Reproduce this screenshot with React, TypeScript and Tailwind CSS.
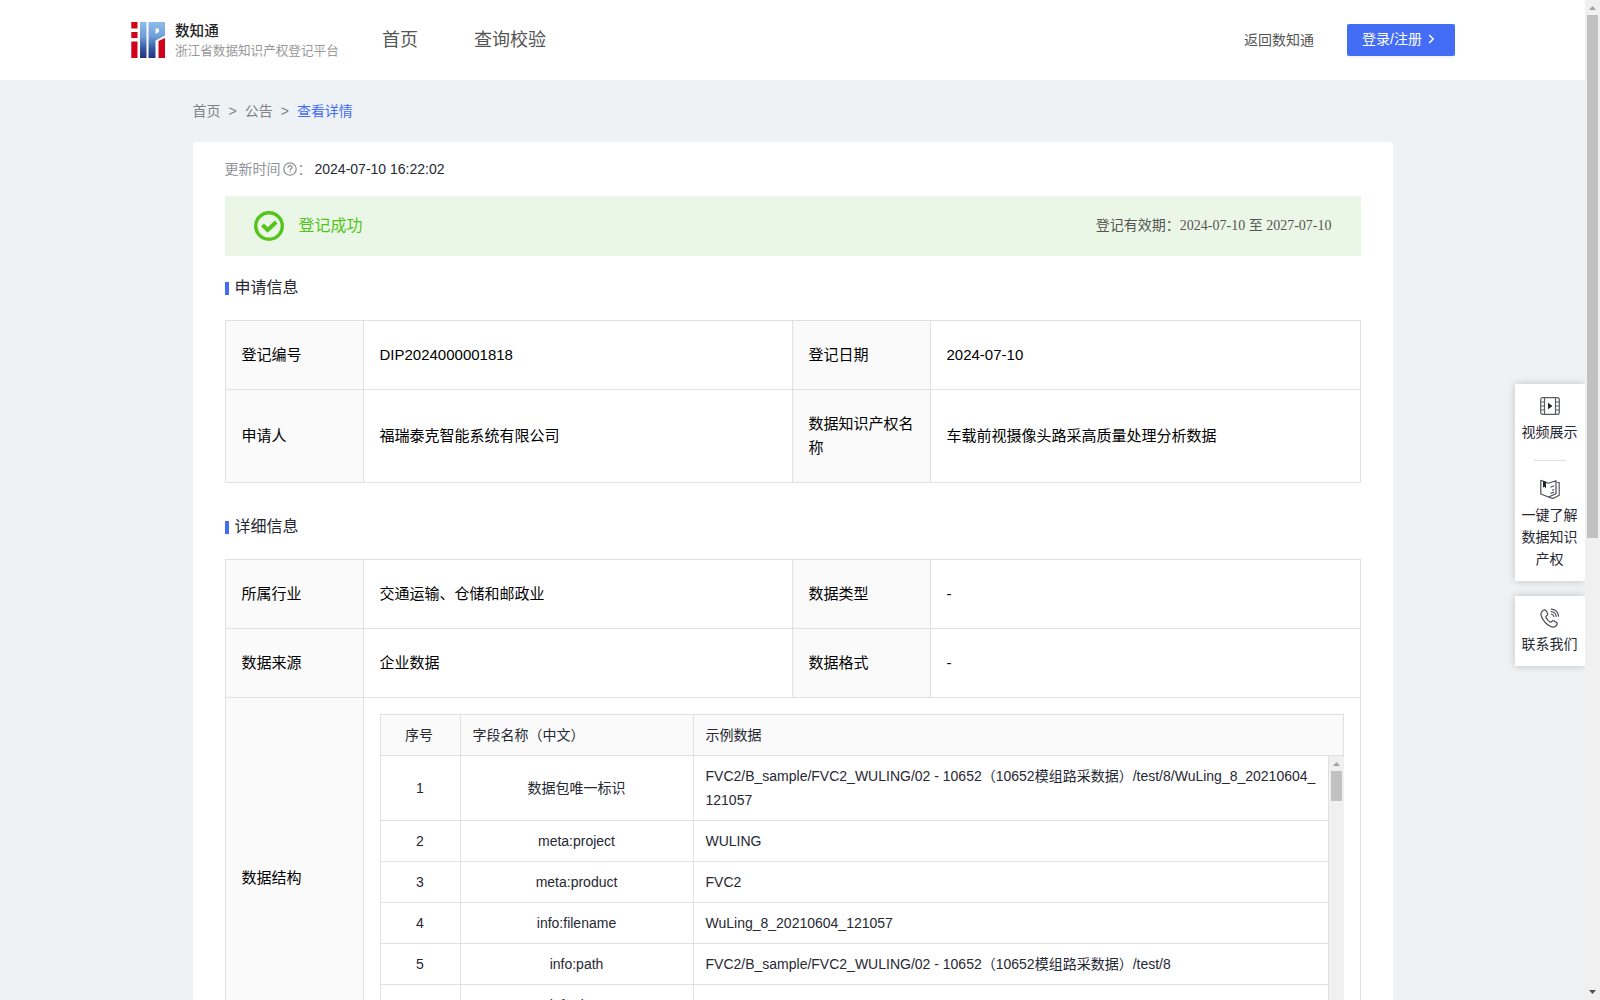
import React from "react";

const SANS = "font-['Liberation_Sans','Noto_Sans_CJK_SC',sans-serif]";
const SERIF = "font-['Liberation_Serif','Noto_Sans_CJK_SC',serif]";

function Logo() {
  return (
    <svg className="h-9 w-[35px] shrink-0" viewBox="0 0 35 36">
      <defs>
        <linearGradient id="logoBlue" x1="0" y1="0" x2="0" y2="36" gradientUnits="userSpaceOnUse">
          <stop offset="0" stopColor="#8fbcea" />
          <stop offset="0.4" stopColor="#6f9fd8" />
          <stop offset="0.75" stopColor="#34559f" />
          <stop offset="1" stopColor="#22337f" />
        </linearGradient>
      </defs>
      <path fill="#d0021b" d="M0.300 0h6.200v6.500h-6.200zM0.300 10h6.200v6h-6.200zM0.300 19.500h6.200v16.500h-6.200zM27.500 19l6.500-3v20h-6.500z" />
      <path fill="url(#logoBlue)" d="M9 0h6.500v36H9z" />
      <path fill="url(#logoBlue)" d="M17.500 0H34V13.500L24.500 18.500V36H17.500Z" />
      <path fill="#f4f8fd" d="M24.500 6.500h3.500v3.500l-3.500 2z" />
    </svg>
  );
}

function CheckCircle() {
  return (
    <svg className="size-[30px]" viewBox="0 0 30 30" fill="none" stroke="#52c41a">
      <circle cx="15" cy="15" r="13.300" strokeWidth="3.400" />
      <path d="M8.500 14l5.200 5 8.500-8" strokeWidth="4" />
    </svg>
  );
}

function HelpIcon() {
  return (
    <svg className="size-3.5" viewBox="0 0 14 14" fill="none" stroke="#909399">
      <circle cx="7" cy="7" r="6.200" strokeWidth="1.300" />
      <path d="M5 5.700c0-2.600 4-2.500 4-.2 0 1.400-1.900 1.300-1.900 2.900M7.100 9.300v1.200" strokeWidth="1.300" />
    </svg>
  );
}

function VideoIcon() {
  return (
    <svg className="size-5" viewBox="0 0 20 20" fill="none" stroke="#5a5c64" strokeWidth="1.200">
      <rect x="0.700" y="1.700" width="18.600" height="16.600" rx="2" />
      <path d="M4.500 1.700v16.600M15.500 1.700v16.600M.7 6h3.800M.7 10h3.800M.7 14h3.800M15.500 6h3.800M15.500 10h3.800M15.500 14h3.800" />
      <path d="M8 6.800v6.400l4.500-3.200z" fill="#22242c" stroke="none" />
    </svg>
  );
}

function BookIcon() {
  return (
    <svg className="size-5" viewBox="0 0 20 20" fill="none" stroke="#4a4c55" strokeWidth="1.200" strokeLinejoin="round">
      <path d="M.8 1.300L8.500 4.200 16 1.800v13L8.500 18 .8 15z" />
      <path d="M17.300 3.500h1.900v12.700l-6.200 3.200-4.500-1.200" strokeWidth="1.100" />
      <path d="M10.500 8.300l3.500-1.500M12 11.300l2-.8M10.500 14.400l3.500-1.500" strokeWidth="1.100" />
      <path d="M3 1.800l3 1.200v6.500L4.500 7.800 3 8.500z" fill="#22242c" stroke="none" />
    </svg>
  );
}

function PhoneIcon() {
  return (
    <svg className="size-5" viewBox="0 0 20 20" fill="none" stroke="#4a4c55" strokeWidth="1.200" strokeLinecap="round" strokeLinejoin="round">
      <path d="M3.200 2.200C.7 3.800.5 6.500 1.800 9.300c1.700 3.900 4.400 7 8.400 9 2.800 1.400 5.300 1 6.800-1.700.5-.9.300-1.500-.5-2.100l-2.300-1.600c-.8-.5-1.400-.4-2 .3-.8 1-1.500 1.300-2.600.6-1.700-1.100-2.800-2.500-3.600-4.200-.4-1-.1-1.600.9-2.200.8-.5 1-1.100.6-1.900L6.100 2.800c-.5-1-1.700-1.300-2.900-.6z" />
      <path d="M11.300 1.200c4 .3 6.800 3 7.200 7M11.200 3.500c2.800.3 4.600 2 5 4.800M11.200 6c1.500.2 2.400 1 2.700 2.500" />
    </svg>
  );
}

function Header() {
  return (
    <header className="flex h-20 items-center bg-white pl-[131px] pr-[130px]">
      <Logo />
      <div className="ml-[9px] w-[165px] whitespace-nowrap pt-0.5">
        <div className="text-[14.600px] font-medium leading-[20px] text-[#222]">数知通</div>
        <div className="text-[12.600px] leading-[20px] text-[#999]">浙江省数据知识产权登记平台</div>
      </div>
      <nav className="ml-[42px] flex gap-14 text-lg leading-6 text-[#555]">
        <span>首页</span>
        <span>查询校验</span>
      </nav>
      <div className="ml-auto flex items-center gap-[33px] text-sm">
        <span className="pb-px text-[#555]">返回数知通</span>
        <button className="flex h-8 w-[108px] items-center rounded-xs bg-[#446df6] pb-0.5 pl-[15px] text-white shadow-[0_2px_0_rgba(0,0,0,0.045)]">
          登录/注册
          <svg className="ml-1.5 h-2.5 w-[7px]" viewBox="0 0 7 10" fill="none" stroke="currentColor" strokeWidth="1.500">
            <path d="M1.200 1l4 4-4 4" />
          </svg>
        </button>
      </div>
    </header>
  );
}

function SectionTitle({ children }: { children: React.ReactNode }) {
  return (
    <h2 className="flex h-6 items-center gap-1.5 text-base leading-6 text-[#262833]">
      <i className="mt-[3px] h-[13px] w-1 bg-[#446df6]" />
      <span className="pt-px">{children}</span>
    </h2>
  );
}

function InfoRow({ cells, height }: { cells: string[]; height: string }) {
  return (
    <div className={`grid grid-cols-[138px_429px_138px_430px] border-b border-[#e1e1e1] ${height}`}>
      {cells.map((c, i) => (
        <div
          key={i}
          className={`flex items-center border-r border-[#e1e1e1] px-4 pb-px text-[15px] leading-6 text-black ${i % 2 ? "bg-white" : "bg-[#fafafa]"}`}
        >
          {c}
        </div>
      ))}
    </div>
  );
}

const samples = [
  ["1", "数据包唯一标识", "FVC2/B_sample/FVC2_WULING/02 - 10652（10652模组路采数据）/test/8/WuLing_8_20210604_121057"],
  ["2", "meta:project", "WULING"],
  ["3", "meta:product", "FVC2"],
  ["4", "info:filename", "WuLing_8_20210604_121057"],
  ["5", "info:path", "FVC2/B_sample/FVC2_WULING/02 - 10652（10652模组路采数据）/test/8"],
  ["6", "info:date", "2021-12"],
];

function Arrow({ down, color }: { down?: boolean; color: string }) {
  return (
    <svg className="size-[15px] shrink-0" viewBox="0 0 15 15">
      <path d={down ? "M4 5h7L7.500 9z" : "M4 10h7L7.500 6z"} fill={color} />
    </svg>
  );
}

function SampleTable() {
  return (
    <div className="h-[328px] overflow-hidden border-l border-t border-[#e1e1e1] text-sm leading-6 text-[#262833]">
      <div className="grid h-[41px] grid-cols-[80px_233px_650px] items-stretch border-b border-[#e1e1e1] bg-[#fafafa]">
        <div className="flex items-center justify-center border-r border-[#e1e1e1] pb-px pr-0.5">序号</div>
        <div className="flex items-center border-r border-[#e1e1e1] px-3 pb-px">字段名称（中文）</div>
        <div className="flex items-center border-r border-[#e1e1e1] px-3 pb-px">示例数据</div>
      </div>
      <div className="flex">
        <div className="w-[948px]">
          {samples.map(([n, name, value]) => (
            <div key={n} className="grid grid-cols-[80px_233px_635px] border-b border-[#e1e1e1]">
              <div className="flex items-center justify-center border-r border-[#e1e1e1] py-2">{n}</div>
              <div className="flex items-center justify-center border-r border-[#e1e1e1] py-2">{name}</div>
              <div className="border-r border-[#e1e1e1] px-3 py-2 break-all">{value}</div>
            </div>
          ))}
        </div>
        <div className="flex w-[15px] flex-col items-center bg-[#f0f0f0]">
          <Arrow color="#a3a3a3" />
          <div className="h-[30px] w-[11px] bg-[#c1c1c1]" />
        </div>
      </div>
    </div>
  );
}

function SideItem({ icon, children }: { icon: React.ReactNode; children: React.ReactNode }) {
  return (
    <div className="flex flex-col items-center gap-[5px] text-center text-sm leading-[22px] text-[#262833]">
      {icon}
      <span className="mr-px w-14">{children}</span>
    </div>
  );
}

export default function App() {
  return (
    <div className={`relative flex h-[1000px] w-[1600px] overflow-hidden bg-[#eef2f5] ${SANS}`}>
      <div className="h-full w-[1585px] overflow-hidden">
        <Header />
        <main className="mx-auto w-[1200px]">
          <div className="flex h-[62px] items-center gap-2 pb-px text-sm text-[#808387]">
            <span>首页</span>
            <span>&gt;</span>
            <span>公告</span>
            <span>&gt;</span>
            <span className="text-[#446df6]">查看详情</span>
          </div>
          <div className="rounded bg-white px-8 pt-4">
            <div className="flex h-[22px] items-center text-sm leading-[22px]">
              <span className="mr-0.5 text-[#909399]">更新时间</span>
              <HelpIcon />
              <span className="ml-px mr-px w-4 text-[#909399]">：</span>
              <span className="text-[#262833]">2024-07-10 16:22:02</span>
            </div>
            <div className="mt-4 flex h-[60px] items-center bg-[#ebf7e6] pl-[29px] pr-[29px]">
              <CheckCircle />
              <span className="ml-[15px] text-base text-[#52c41a]">登记成功</span>
              <span className={`ml-auto text-sm text-[#555] ${SERIF}`}>登记有效期：2024-07-10 至 2027-07-10</span>
            </div>
            <div className="mt-[19px]">
              <SectionTitle>申请信息</SectionTitle>
            </div>
            <div className="mt-[21px] border-l border-t border-[#e1e1e1]">
              <InfoRow height="h-[69px]" cells={["登记编号", "DIP2024000001818", "登记日期", "2024-07-10"]} />
              <InfoRow height="h-[93px]" cells={["申请人", "福瑞泰克智能系统有限公司", "数据知识产权名称", "车载前视摄像头路采高质量处理分析数据"]} />
            </div>
            <div className="mt-[31px]">
              <SectionTitle>详细信息</SectionTitle>
            </div>
            <div className="mt-[21px] border-l border-t border-[#e1e1e1]">
              <InfoRow height="h-[69px]" cells={["所属行业", "交通运输、仓储和邮政业", "数据类型", "-"]} />
              <InfoRow height="h-[69px]" cells={["数据来源", "企业数据", "数据格式", "-"]} />
              <div className="grid h-[361px] grid-cols-[138px_997px] border-b border-[#e1e1e1]">
                <div className="flex items-center border-r border-[#e1e1e1] bg-[#fafafa] px-4 text-[15px]">数据结构</div>
                <div className="border-r border-[#e1e1e1] p-4">
                  <SampleTable />
                </div>
              </div>
            </div>
          </div>
        </main>
      </div>

      <div className="flex h-full w-[15px] flex-col items-center bg-[#f0f0f0]">
        <Arrow color="#a3a3a3" />
        <div className="h-[523px] w-[11px] bg-[#c1c1c1]" />
        <div className="mt-auto">
          <Arrow down color="#505050" />
        </div>
      </div>

      <aside className="absolute right-[15px] top-[384px] flex w-[70px] flex-col gap-[15px] [clip-path:inset(-20px_0_-20px_-20px)]">
        <div className="flex h-[197px] flex-col items-center bg-white pt-3 shadow-[0_0_8px_rgba(0,0,0,0.2)]">
          <SideItem icon={<VideoIcon />}>视频展示</SideItem>
          <div className="mb-[18px] mt-[17px] h-px w-8 shrink-0 bg-[#ddd]" />
          <SideItem icon={<BookIcon />}>一键了解数据知识产权</SideItem>
        </div>
        <div className="flex h-[70px] flex-col items-center bg-white pt-3 shadow-[0_0_8px_rgba(0,0,0,0.2)]">
          <SideItem icon={<PhoneIcon />}>联系我们</SideItem>
        </div>
      </aside>
    </div>
  );
}
